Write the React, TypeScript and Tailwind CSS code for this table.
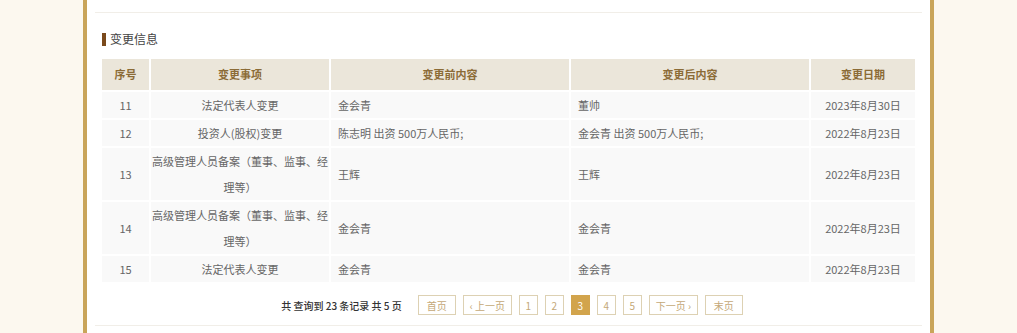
import React from "react";

interface ChangeRow {
  no: number;
  item: React.ReactNode;
  before: string;
  after: string;
  date: string;
}

const rows: ChangeRow[] = [
  { no: 11, item: "法定代表人变更", before: "金会青", after: "董帅", date: "2023年8月30日" },
  { no: 12, item: "投资人(股权)变更", before: "陈志明 出资 500万人民币;", after: "金会青 出资 500万人民币;", date: "2022年8月23日" },
  {
    no: 13,
    item: (
      <>
        高级管理人员备案（董事、监事、经
        <br />
        理等）
      </>
    ),
    before: "王辉",
    after: "王辉",
    date: "2022年8月23日",
  },
  {
    no: 14,
    item: (
      <>
        高级管理人员备案（董事、监事、经
        <br />
        理等）
      </>
    ),
    before: "金会青",
    after: "金会青",
    date: "2022年8月23日",
  },
  { no: 15, item: "法定代表人变更", before: "金会青", after: "金会青", date: "2022年8月23日" },
];

const pages = [
  { label: "首页", w: "w-[38px]" },
  { label: "‹ 上一页", w: "w-[49px]" },
  { label: "1", w: "w-[19px]" },
  { label: "2", w: "w-[19px]" },
  { label: "3", w: "w-[19px]", active: true },
  { label: "4", w: "w-[19px]" },
  { label: "5", w: "w-[19px]" },
  { label: "下一页 ›", w: "w-[49px]" },
  { label: "末页", w: "w-[38px]" },
];

export default function App() {
  return (
    <div
      className="min-h-[333px] bg-[#fcf8ef]"
      style={{ fontFamily: '"Noto Sans CJK SC", "Noto Sans", sans-serif' }}
    >
      <div className="mx-auto w-[851px] h-[333px] bg-white border-x-4 border-[#c9a55a]">
        <div className="h-[13px] mx-2 border-b border-[#f1eee8]" />

        <div className="pl-[15px] pr-[11px]">
          <div className="flex items-center h-[14px] mt-[19px] mb-[11px]">
            <span className="w-1 h-[13px] bg-[#7a4a1c] mr-1" />
            <span className="text-[12px] leading-none text-[#444]">变更信息</span>
          </div>

          <table className="table-fixed w-[817px] -ml-[2px] border-separate border-spacing-0.5 text-[11px] text-[#666]">
            <colgroup>
              <col className="w-[47px]" />
              <col className="w-[178px]" />
              <col className="w-[238px]" />
              <col className="w-[238px]" />
              <col className="w-[104px]" />
            </colgroup>
            <thead>
              <tr className="h-[31px]">
                {["序号", "变更事项", "变更前内容", "变更后内容", "变更日期"].map((h) => (
                  <th key={h} className="p-0 bg-[#ebe6da] text-center font-bold text-[#8b6b36]">
                    {h}
                  </th>
                ))}
              </tr>
            </thead>
            <tbody>
              {rows.map((r) => (
                <tr key={r.no}>
                  <td className="p-0 leading-[26px] bg-[#f9f9f9] text-center">{r.no}</td>
                  <td className="p-0 leading-[26px] bg-[#f9f9f9] text-center whitespace-nowrap">{r.item}</td>
                  <td className="py-0 pl-[7px] leading-[26px] bg-[#f9f9f9]">{r.before}</td>
                  <td className="py-0 pl-[7px] leading-[26px] bg-[#f9f9f9]">{r.after}</td>
                  <td className="p-0 leading-[26px] bg-[#f9f9f9] text-center">{r.date}</td>
                </tr>
              ))}
            </tbody>
          </table>

          <div className="flex items-center justify-center pl-[3px] mt-[11px] h-[20px]">
            <span className="text-[10px] font-medium text-[#333] mr-[16px]">共 查询到 23 条记录 共 5 页</span>
            <div className="flex gap-[7px]">
              {pages.map((p) => (
                <span
                  key={p.label}
                  className={`${p.w} h-[20px] flex items-center justify-center text-[10px] border ${
                    p.active
                      ? "bg-[#d2a44c] border-[#d2a44c] text-white"
                      : "border-[#ddd1b3] text-[#c4a877]"
                  }`}
                >
                  {p.label}
                </span>
              ))}
            </div>
          </div>
        </div>

        <div className="mt-[10px] mx-2 border-b border-[#f1eee8]" />
      </div>
    </div>
  );
}
